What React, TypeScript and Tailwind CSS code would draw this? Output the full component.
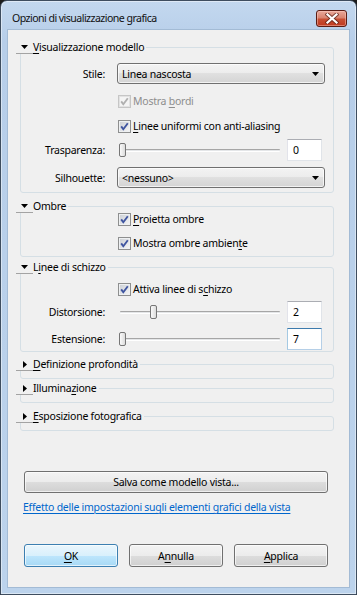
import React from "react";

function Ak({ c }: { c: string }) {
  return <span className="underline decoration-1 underline-offset-[2px]">{c}</span>;
}

function CheckBox({ disabled = false }: { disabled?: boolean }) {
  return (
    <span
      className={`relative flex h-[13px] w-[13px] shrink-0 border ${
        disabled
          ? "border-[#c6c6c6] bg-[#f4f4f4]"
          : "border-[#8e8f8f] bg-[linear-gradient(135deg,#c9cdd3,#f7f7f7)]"
      }`}
    >
      <span
        className={`absolute inset-0 border ${
          disabled ? "border-[#e2e2e2]" : "border-[#eef0f2]"
        }`}
      />
      <svg className="relative" width="11" height="11" viewBox="0 0 11 11">
        <path
          d="M2.2 5.4 L4.3 8.2 L8.8 2.2"
          stroke={disabled ? "#b0b0b0" : "#3f55a0"}
          strokeWidth="1.9"
          fill="none"
        />
      </svg>
    </span>
  );
}

function Combo({ text }: { text: string }) {
  return (
    <div className="flex h-[21px] w-[208px] items-center justify-between rounded-[3px] border border-[#707070] bg-[linear-gradient(#f3f3f3_0%,#ececec_50%,#e0e0e0_50%,#d4d4d4_100%)] pl-[4px] pr-[5px] shadow-[inset_0_0_0_1px_rgba(255,255,255,0.7)]">
      <span className="leading-[14px]">{text}</span>
      <svg width="7" height="4" viewBox="0 0 7 4">
        <path d="M0 0H7L3.5 4Z" fill="#000" />
      </svg>
    </div>
  );
}

function Slider({ thumbClass }: { thumbClass: string }) {
  return (
    <div className="relative flex h-[22px] w-[166px] items-center">
      <div className="ml-[3px] h-[3px] w-[160px] rounded-[1px] border-t border-b border-t-[#a6a6a6] border-b-[#ffffff] bg-[#e4e6e8]" />
      <div
        className={`absolute top-[4px] h-[14px] w-[7px] rounded-[2px] border border-[#767676] bg-[linear-gradient(90deg,#fafafa,#dcdcdc)] ${thumbClass}`}
      />
    </div>
  );
}

function TextBox({ value, focused = false }: { value: string; focused?: boolean }) {
  return (
    <div
      className={`ml-[4px] flex h-[22px] w-[35px] items-center border bg-white pl-[5px] ${
        focused
          ? "border-[#b5cfe7] border-t-[#3d7bad] border-l-[#a4c9e3]"
          : "border-[#e0e4e9] border-t-[#abadb3] border-l-[#e2e3ea]"
      }`}
    >
      {value}
    </div>
  );
}

function Row({
  label,
  className = "",
  children,
}: {
  label: string;
  className?: string;
  children: React.ReactNode;
}) {
  return (
    <div className={`flex items-center ${className}`}>
      <span className="w-[84px] text-right">{label}</span>
      <div className="ml-[12px] flex items-center">{children}</div>
    </div>
  );
}

function CheckRow({
  disabled = false,
  className = "",
  children,
}: {
  disabled?: boolean;
  className?: string;
  children: React.ReactNode;
}) {
  return (
    <div className={`flex h-[24px] items-center gap-[2px] pl-[97px] ${className}`}>
      <CheckBox disabled={disabled} />
      <span className={disabled ? "text-[#8d8d8d]" : ""}>{children}</span>
    </div>
  );
}

function Section({
  title,
  expanded,
  className = "",
  children,
}: {
  title: React.ReactNode;
  expanded: boolean;
  className?: string;
  children?: React.ReactNode;
}) {
  return (
    <div className={`relative ml-[12px] w-[314px] rounded-[3px] border border-[#d5dfe5] ${className}`}>
      <div className="absolute left-[-5px] top-[-8px] flex h-[14px] items-center bg-[#f0f0f0]">
        <span className="flex h-[14px] w-[17px] items-center justify-center border-b border-[#a3a3a3]">
          {expanded ? (
            <svg width="7" height="4" viewBox="0 0 7 4" className="mt-[1px]">
              <path d="M0 0H7L3.5 4Z" fill="#000" />
            </svg>
          ) : (
            <svg width="4" height="7" viewBox="0 0 4 7" className="ml-[1px] mt-[1px]">
              <path d="M0 0V7L4 3.5Z" fill="#000" />
            </svg>
          )}
        </span>
        <span className="pr-[2px] leading-[14px]">{title}</span>
      </div>
      {children}
    </div>
  );
}

function Btn({
  children,
  def = false,
  className = "",
}: {
  children: React.ReactNode;
  def?: boolean;
  className?: string;
}) {
  return (
    <div
      className={`flex items-center justify-center rounded-[3px] border shadow-[inset_0_0_0_1px_rgba(255,255,255,0.65)] ${
        def
          ? "border-[#3c7fb1] bg-[linear-gradient(#eaf6fd_0%,#d9f0fc_50%,#bee6fd_50%,#a7d9f5_100%)]"
          : "border-[#707070] bg-[linear-gradient(#f3f3f3_0%,#ececec_50%,#dddddd_50%,#d0d0d0_100%)]"
      } ${className}`}
    >
      {children}
    </div>
  );
}

export default function App() {
  return (
    <div className="h-[595px] w-[357px] bg-[#1c1c1c] font-['Noto_Sans',sans-serif] text-[10.5px] leading-[14px] tracking-[-0.25px] text-black">
      <div className="flex h-[595px] w-[357px] flex-col rounded-t-[7px] border border-[#3e4d5f] bg-[linear-gradient(#c3d8ef,#b7cee9_40px,#bcd3ec)] px-[6px] pb-[6px] shadow-[inset_0_0_0_1px_rgba(255,255,255,0.45)]">
        <div className="flex h-[28px] items-start">
          <span className="ml-[5px] mt-[9px] text-[10.6px] leading-[16px] tracking-[-0.55px] text-[#111]">
            Opzioni di visualizzazione grafica
          </span>
          <div className="ml-auto mr-[3px] mt-[9px] flex h-[17px] w-[31px] items-center justify-center rounded-[3px] border border-[#5b1d14] bg-[linear-gradient(#e9a99b_0%,#d98470_45%,#c74f33_55%,#c0391f_100%)] shadow-[inset_0_0_0_1px_rgba(255,210,200,0.45)]">
            <svg width="14" height="11" viewBox="0 0 14 11">
              <path d="M2.5 1.5 L11.5 9.5 M11.5 1.5 L2.5 9.5" stroke="#5a2218" strokeWidth="4" strokeLinecap="square" opacity="0.75" />
              <path d="M2.5 1.5 L11.5 9.5 M11.5 1.5 L2.5 9.5" stroke="#ffffff" strokeWidth="2.2" strokeLinecap="square" />
            </svg>
          </div>
        </div>

        <div className="flex flex-1 flex-col border border-[#a3bbd5] bg-[#f0f0f0]">
          <Section
            expanded
            className="mt-[17px]"
            title={
              <>
                <Ak c="V" />
                isualizzazione modello
              </>
            }
          >
            <div className="flex flex-col pb-[4px] pt-[15px]">
              <Row label="Stile:" className="h-[21px]">
                <Combo text="Linea nascosta" />
              </Row>
              <CheckRow disabled className="mt-[5px]">
                Mostra <Ak c="b" />
                ordi
              </CheckRow>
              <CheckRow className="mt-[1px]">
                <Ak c="L" />
                inee uniformi con anti-aliasing
              </CheckRow>
              <Row label="Trasparenza:" className="mt-[1px] h-[22px]">
                <Slider thumbClass="left-[2px]" />
                <TextBox value="0" />
              </Row>
              <Row label="Silhouette:" className="mt-[6px] h-[21px]">
                <Combo text={"<nessuno>"} />
              </Row>
            </div>
          </Section>

          <Section expanded className="mt-[13px]" title="Ombre">
            <div className="flex flex-col pb-[1px]">
              <CheckRow>
                <Ak c="P" />
                roietta ombre
              </CheckRow>
              <CheckRow>
                Mostra ombre ambien
                <Ak c="t" />e
              </CheckRow>
            </div>
          </Section>

          <Section
            expanded
            className="mt-[10px]"
            title={
              <>
                L<Ak c="i" />
                nee di schizzo
              </>
            }
          >
            <div className="flex flex-col pb-[1px] pt-[9px]">
              <CheckRow>
                Attiva linee di s<Ak c="c" />
                hizzo
              </CheckRow>
              <Row label="Distorsione:" className="h-[22px]">
                <Slider thumbClass="left-[33px]" />
                <TextBox value="2" />
              </Row>
              <Row label="Estensione:" className="mt-[5px] h-[22px]">
                <Slider thumbClass="left-[2px]" />
                <TextBox value="7" focused />
              </Row>
            </div>
          </Section>

          <Section
            expanded={false}
            className="mt-[12px] h-[15px]"
            title={
              <>
                <Ak c="D" />
                efinizione profondità
              </>
            }
          />
          <Section
            expanded={false}
            className="mt-[9px] h-[15px]"
            title={
              <>
                Illumina
                <Ak c="z" />
                ione
              </>
            }
          />
          <Section
            expanded={false}
            className="mt-[13px] h-[15px]"
            title={
              <>
                <Ak c="E" />
                sposizione fotografica
              </>
            }
          />

          <Btn className="ml-[16px] mt-[40px] h-[22px] w-[304px]">Salva come modello vista...</Btn>

          <a className="ml-[15px] mt-[7px] self-start leading-[15px] text-[#0066cc] underline decoration-1 underline-offset-[2px]">
            Effetto delle impostazioni sugli elementi grafici della vista
          </a>

          <div className="ml-[16px] mt-[29px] flex gap-[11px]">
            <Btn def className="h-[23px] w-[94px]">
              <span>
                <Ak c="O" />K
              </span>
            </Btn>
            <Btn className="h-[23px] w-[94px]">
              <span>
                A<Ak c="n" />
                nulla
              </span>
            </Btn>
            <Btn className="h-[23px] w-[94px]">
              <span>
                <Ak c="A" />
                pplica
              </span>
            </Btn>
          </div>
        </div>
      </div>
    </div>
  );
}
